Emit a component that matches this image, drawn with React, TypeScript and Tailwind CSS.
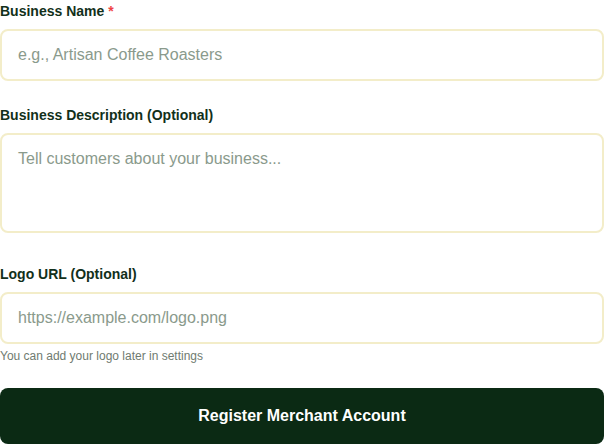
export default function App() {
  return (
    <div className="min-h-screen bg-white font-['Liberation_Sans',Arial,sans-serif]">
      <form className="flex flex-col pt-px" onSubmit={e => e.preventDefault()}>
        <div className="flex flex-col gap-2">
          <label className="text-sm leading-5 font-bold text-[#12301a]">
            Business Name <span className="text-[#ef4444]">*</span>
          </label>
          <input
            type="text"
            placeholder="e.g., Artisan Coffee Roasters"
            className="block w-[604px] rounded-lg border-2 border-[#f3edc9] bg-white px-4 py-3 text-base leading-6 text-[#12301a] placeholder:text-[#8a9a8c] outline-none"
          />
        </div>

        <div className="mt-6 flex flex-col gap-2">
          <label className="text-sm leading-5 font-bold text-[#12301a]">Business Description (Optional)</label>
          <textarea
            rows={3}
            placeholder="Tell customers about your business..."
            className="block w-[604px] resize-none rounded-lg border-2 border-[#f3edc9] bg-white px-4 py-3 text-base leading-6 text-[#12301a] placeholder:text-[#8a9a8c] outline-none"
          />
        </div>

        <div className="mt-[31px] flex flex-col gap-2">
          <label className="text-sm leading-5 font-bold text-[#12301a]">Logo URL (Optional)</label>
          <div className="flex flex-col gap-1">
            <input
              type="text"
              placeholder="https://example.com/logo.png"
              className="block w-[604px] rounded-lg border-2 border-[#f3edc9] bg-white px-4 py-3 text-base leading-6 text-[#12301a] placeholder:text-[#8a9a8c] outline-none"
            />
            <p className="text-xs leading-4 text-[#6f7b70]">You can add your logo later in settings</p>
          </div>
        </div>

        <button
          type="submit"
          className="mt-6 w-[604px] rounded-lg bg-[#0b2a14] py-4 text-base leading-6 font-bold text-white"
        >
          Register Merchant Account
        </button>
      </form>
    </div>
  );
}
